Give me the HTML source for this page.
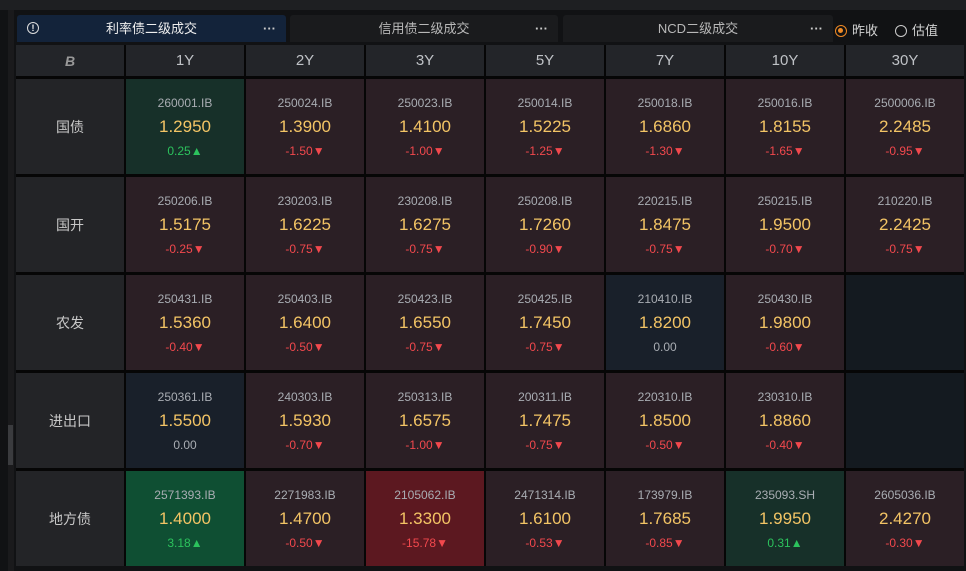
<!DOCTYPE html><html><head><meta charset="utf-8"><style>
*{margin:0;padding:0;box-sizing:border-box}
body{width:966px;height:571px;background:#111214;position:relative;overflow:hidden;font-family:"Liberation Sans","Noto Sans CJK SC",sans-serif}
.top{position:absolute;left:0;top:0;width:966px;height:10px;background:#1e1f22}
.side{position:absolute;left:8px;top:10px;width:6px;height:561px;background:#1a1a1c}
.side2{position:absolute;left:8px;top:425px;width:5px;height:40px;background:#3a3b3e}
.tab{position:absolute;top:15px;height:27px;background:#1a1b1d;color:#b8b8b8;font-size:13px;line-height:27px;text-align:center;border-radius:3px 3px 0 0}
.tab .d{position:absolute;right:10px;top:0;letter-spacing:0;font-weight:bold;color:#ccc}
.grid{position:absolute;left:16px;top:45px;display:grid;grid-template-columns:108px repeat(7,118px);grid-template-rows:31px repeat(5,95px);gap:3px 2px;background:#060606}
.h{background:#232529;color:#bfc2c6;font-size:15px;display:flex;align-items:center;justify-content:center}
.l{background:#232427;color:#c8c8c8;font-size:14px;display:flex;align-items:center;justify-content:center}
.c{background:#2b1f25;text-align:center;padding-top:17px}
.g{background:#173029}.G{background:#0f4f33}.R{background:#5c1820}.n{background:#19202a}.e{background:#141a20}
.code{color:#a9adb3;font-size:12px;height:15px}
.v{color:#f3c465;font-size:17px;margin-top:6px;height:22px}
.ch{font-size:12px;margin-top:5px;color:#f2484d}
.up{color:#2cc25d}.z{color:#a9adb3}
.radio{position:absolute;top:20px;font-size:13px;color:#d0d0d0}
.radio i{display:inline-block;width:12px;height:12px;border:1.5px solid #ccc;border-radius:50%;vertical-align:-2px;margin-right:5px;position:relative}
</style></head><body>
<div class="top"></div><div class="side"></div><div class="side2"></div>
<div class="tab" style="left:17px;width:269px;background:#13233a;color:#eee"><span style="position:absolute;left:10px;top:7px;width:12px;height:12px;border:1.3px solid #ddd;border-radius:50%;font-size:9px;line-height:10px;font-weight:bold">!</span>利率债二级成交<span class="d">···</span></div>
<div class="tab" style="left:290px;width:268px">信用债二级成交<span class="d">···</span></div>
<div class="tab" style="left:563px;width:270px">NCD二级成交<span class="d">···</span></div>
<div class="radio" style="left:835px"><i style="border-color:#f08a24"><b style="position:absolute;left:2px;top:2px;width:5px;height:5px;border-radius:50%;background:#f08a24"></b></i>昨收</div>
<div class="radio" style="left:895px"><i></i>估值</div>
<div class="grid">
<div class="h" style="color:#999;font-weight:900;font-style:italic;font-size:14px">B</div><div class="h">1Y</div><div class="h">2Y</div><div class="h">3Y</div><div class="h">5Y</div><div class="h">7Y</div><div class="h">10Y</div><div class="h">30Y</div>
<div class="l">国债</div>
<div class="c g"><div class="code">260001.IB</div><div class="v">1.2950</div><div class="ch up">0.25▲</div></div>
<div class="c"><div class="code">250024.IB</div><div class="v">1.3900</div><div class="ch">-1.50▼</div></div>
<div class="c"><div class="code">250023.IB</div><div class="v">1.4100</div><div class="ch">-1.00▼</div></div>
<div class="c"><div class="code">250014.IB</div><div class="v">1.5225</div><div class="ch">-1.25▼</div></div>
<div class="c"><div class="code">250018.IB</div><div class="v">1.6860</div><div class="ch">-1.30▼</div></div>
<div class="c"><div class="code">250016.IB</div><div class="v">1.8155</div><div class="ch">-1.65▼</div></div>
<div class="c"><div class="code">2500006.IB</div><div class="v">2.2485</div><div class="ch">-0.95▼</div></div>
<div class="l">国开</div>
<div class="c"><div class="code">250206.IB</div><div class="v">1.5175</div><div class="ch">-0.25▼</div></div>
<div class="c"><div class="code">230203.IB</div><div class="v">1.6225</div><div class="ch">-0.75▼</div></div>
<div class="c"><div class="code">230208.IB</div><div class="v">1.6275</div><div class="ch">-0.75▼</div></div>
<div class="c"><div class="code">250208.IB</div><div class="v">1.7260</div><div class="ch">-0.90▼</div></div>
<div class="c"><div class="code">220215.IB</div><div class="v">1.8475</div><div class="ch">-0.75▼</div></div>
<div class="c"><div class="code">250215.IB</div><div class="v">1.9500</div><div class="ch">-0.70▼</div></div>
<div class="c"><div class="code">210220.IB</div><div class="v">2.2425</div><div class="ch">-0.75▼</div></div>
<div class="l">农发</div>
<div class="c"><div class="code">250431.IB</div><div class="v">1.5360</div><div class="ch">-0.40▼</div></div>
<div class="c"><div class="code">250403.IB</div><div class="v">1.6400</div><div class="ch">-0.50▼</div></div>
<div class="c"><div class="code">250423.IB</div><div class="v">1.6550</div><div class="ch">-0.75▼</div></div>
<div class="c"><div class="code">250425.IB</div><div class="v">1.7450</div><div class="ch">-0.75▼</div></div>
<div class="c n"><div class="code">210410.IB</div><div class="v">1.8200</div><div class="ch z">0.00</div></div>
<div class="c"><div class="code">250430.IB</div><div class="v">1.9800</div><div class="ch">-0.60▼</div></div>
<div class="c e"></div>
<div class="l">进出口</div>
<div class="c n"><div class="code">250361.IB</div><div class="v">1.5500</div><div class="ch z">0.00</div></div>
<div class="c"><div class="code">240303.IB</div><div class="v">1.5930</div><div class="ch">-0.70▼</div></div>
<div class="c"><div class="code">250313.IB</div><div class="v">1.6575</div><div class="ch">-1.00▼</div></div>
<div class="c"><div class="code">200311.IB</div><div class="v">1.7475</div><div class="ch">-0.75▼</div></div>
<div class="c"><div class="code">220310.IB</div><div class="v">1.8500</div><div class="ch">-0.50▼</div></div>
<div class="c"><div class="code">230310.IB</div><div class="v">1.8860</div><div class="ch">-0.40▼</div></div>
<div class="c e"></div>
<div class="l">地方债</div>
<div class="c G"><div class="code">2571393.IB</div><div class="v">1.4000</div><div class="ch up">3.18▲</div></div>
<div class="c"><div class="code">2271983.IB</div><div class="v">1.4700</div><div class="ch">-0.50▼</div></div>
<div class="c R"><div class="code">2105062.IB</div><div class="v">1.3300</div><div class="ch">-15.78▼</div></div>
<div class="c"><div class="code">2471314.IB</div><div class="v">1.6100</div><div class="ch">-0.53▼</div></div>
<div class="c"><div class="code">173979.IB</div><div class="v">1.7685</div><div class="ch">-0.85▼</div></div>
<div class="c g"><div class="code">235093.SH</div><div class="v">1.9950</div><div class="ch up">0.31▲</div></div>
<div class="c"><div class="code">2605036.IB</div><div class="v">2.4270</div><div class="ch">-0.30▼</div></div>
</div>
</body></html>
